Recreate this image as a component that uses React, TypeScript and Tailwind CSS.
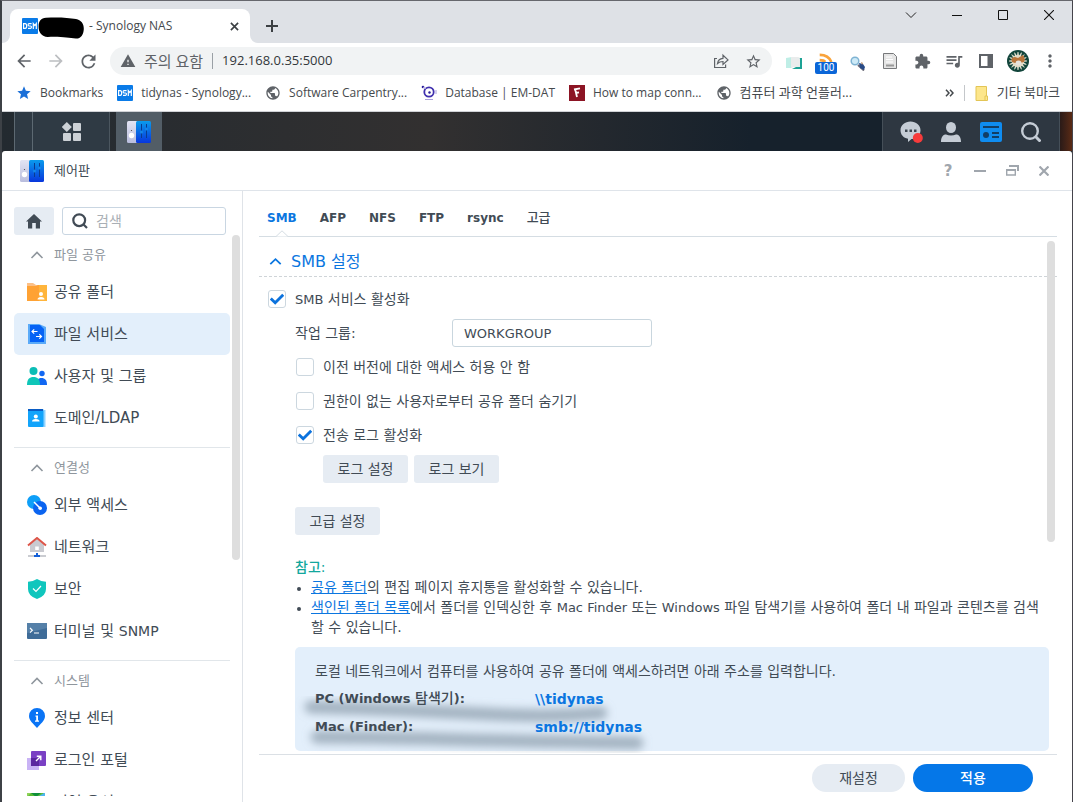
import type { ReactNode } from 'react';
import {
  MdArrowBack,
  MdArrowForward,
  MdExtension,
  MdMoreVert,
  MdPublic,
  MdQueueMusic,
  MdRefresh,
  MdStar,
  MdStarBorder,
  MdWarning,
} from 'react-icons/md';

/* Latin runs sit one size below the Hangul around them. */
function En({ children }: { children: ReactNode }) {
  return <span className="text-[13px] leading-4">{children}</span>;
}

function DsmLogo() {
  return (
    <svg viewBox="0 0 16 16" className="size-4 shrink-0" aria-hidden="true">
      <rect width="16" height="16" rx="1" fill="#0a7be8" />
      <g fill="none" stroke="#fff" strokeWidth="1.2">
        <path d="M1.6 5.7h1.6q1.5 0 1.5 2.3t-1.5 2.3H1.6z" />
        <path d="M9.6 5.7H7q-.9 0-.9 1.1T7 8h1.500q1 0 1 1.100t-1 1.200H6" />
        <path d="M11.300 10.900V5.600l1.500 2 1.500-2v5.300" />
      </g>
    </svg>
  );
}

function ControlPanelIcon() {
  return (
    <svg viewBox="0 0 24 22" className="h-[22px] w-6" aria-hidden="true">
      <defs>
        <linearGradient id="cpBlue" x1="0" y1="0" x2="0" y2="1">
          <stop offset="0" stopColor="#0a9bec" />
          <stop offset="1" stopColor="#0836dc" />
        </linearGradient>
        <linearGradient id="cpGrey" x1="0" y1="0" x2="0" y2="1">
          <stop offset="0" stopColor="#e2e4f3" />
          <stop offset="1" stopColor="#b9bddd" />
        </linearGradient>
      </defs>
      <rect width="11" height="22" rx="1.500" fill="url(#cpGrey)" />
      <rect x="9" width="15" height="22" rx="1.500" fill="url(#cpBlue)" />
      <circle cx="4.500" cy="14.500" r="2.700" fill="#fff" />
      <circle cx="4.500" cy="9.500" r=".6" fill="#444" />
      <path d="M14.500 3v14M19.500 3v14" stroke="#0a3c8f" strokeWidth="1" />
      <circle cx="14.500" cy="11" r="1.500" fill="#1687e8" />
      <circle cx="19.500" cy="8" r="1.500" fill="#1687e8" />
    </svg>
  );
}

/* ---------- Browser chrome ---------- */

function TabStrip() {
  return (
    <div className="flex h-[42px] shrink-0 items-start bg-[#dee1e6]">
      <div className="relative mt-2 ml-2 flex h-[34px] w-60 items-center rounded-t-lg bg-white pr-2 pl-3">
        <svg viewBox="0 0 8 8" className="absolute bottom-0 -left-2 size-2" aria-hidden="true">
          <path d="M8 0v8H0a8 8 0 0 0 8-8z" fill="#fff" />
        </svg>
        <svg viewBox="0 0 8 8" className="absolute -right-2 bottom-0 size-2" aria-hidden="true">
          <path d="M0 0v8h8a8 8 0 0 1-8-8z" fill="#fff" />
        </svg>
        <DsmLogo />
        <svg viewBox="0 0 46 22" className="mt-1 h-[22px] w-[46px]" aria-hidden="true">
          <path
            d="M8 .8C18 0 30 .500 38 2c5 1 8 4.500 7.800 10-.3 6-3 9.800-8 9.600-7-.4-14-2.300-28-1.600C3.500 19.800.600 15 .6 10 .500 4 3 1 8 .8z"
            fill="#000"
          />
        </svg>
        <span className="ml-[5px] flex-1 text-[12px] whitespace-nowrap text-[#45494d]">- Synology NAS</span>
        <button aria-label="탭 닫기" className="grid size-4 place-items-center">
          <svg viewBox="0 0 10 10" className="size-[9px]" stroke="#3c4043" strokeWidth="1.800" aria-hidden="true">
            <path d="M1 1l8 8M9 1L1 9" />
          </svg>
        </button>
      </div>
      <button aria-label="새 탭" className="mt-[11px] ml-2 grid size-7 place-items-center">
        <svg viewBox="0 0 12 12" className="size-3" stroke="#3c4043" strokeWidth="2" aria-hidden="true">
          <path d="M6 0v12M0 6h12" />
        </svg>
      </button>
      <div className="ml-auto flex h-7">
        <button aria-label="탭 검색" className="grid w-[46px] place-items-center">
          <svg viewBox="0 0 12 12" className="size-3" fill="none" stroke="#222" aria-hidden="true">
            <path d="M1 3.500l5 5 5-5" />
          </svg>
        </button>
        <button aria-label="최소화" className="grid w-[46px] place-items-center">
          <svg viewBox="0 0 10 10" className="size-[10px]" stroke="#111" aria-hidden="true">
            <path d="M0 5.500h10" />
          </svg>
        </button>
        <button aria-label="최대화" className="grid w-[46px] place-items-center">
          <svg viewBox="0 0 10 10" className="size-[10px]" fill="none" stroke="#111" aria-hidden="true">
            <path d="M.5.5h9v9h-9z" />
          </svg>
        </button>
        <button aria-label="닫기" className="grid w-[46px] place-items-center">
          <svg viewBox="0 0 10 10" className="size-[10px]" stroke="#111" strokeWidth="1.100" aria-hidden="true">
            <path d="M0 0l10 10M10 0L0 10" />
          </svg>
        </button>
      </div>
    </div>
  );
}

function Extension({ label, children }: { label: string; children: ReactNode }) {
  return (
    <button aria-label={label} className="grid h-7 w-8 place-items-center text-[#5f6368]">
      {children}
    </button>
  );
}

function Toolbar() {
  const rays = Array.from({ length: 16 }, (_, i) => i * 22.5);
  return (
    <div className="flex h-9 shrink-0 items-center bg-white px-1.5 text-[#5f6368]">
      <button aria-label="뒤로" className="grid h-7 w-8 place-items-center">
        <MdArrowBack className="size-5" />
      </button>
      <button aria-label="앞으로" className="grid h-7 w-8 place-items-center text-[#bcbec1]">
        <MdArrowForward className="size-5" />
      </button>
      <button aria-label="새로고침" className="grid h-7 w-8 place-items-center">
        <MdRefresh className="size-[21px]" />
      </button>
      <div className="mx-1.5 flex h-7 flex-1 items-center rounded-full bg-[#f1f3f4] pr-2.5 pl-2.5">
        <MdWarning className="size-4" />
        <span className="ml-2 text-[15px] whitespace-nowrap">주의 요함</span>
        <span className="mx-[9px] h-4 w-px bg-[#9aa0a6]" />
        <input
          aria-label="주소"
          readOnly
          value="192.168.0.35:5000"
          className="w-0 flex-1 bg-transparent font-['Open_Sans',sans-serif] text-[13px] text-[#33373b] outline-none"
        />
        <button aria-label="공유" className="mr-4">
          <svg viewBox="0 0 16 16" className="size-4" fill="none" stroke="#5f6368" strokeWidth="1.200" aria-hidden="true">
            <path d="M4 5.500H1.600v9h11V11.500" />
            <path d="M4.500 10.500c.5-3.300 2.300-5 5.500-5.200V2.200l5 4.700-5 4.500V8.500c-2.400 0-4 .5-5.500 2z" />
          </svg>
        </button>
        <button aria-label="북마크 추가">
          <MdStarBorder className="size-[17px]" />
        </button>
      </div>
      <Extension label="책">
        <svg viewBox="0 0 16 14" className="mt-1 h-[14px] w-4" aria-hidden="true">
          <path d="M0 2l6-1v11H0z" fill="#bfeee6" />
          <path d="M10 2h6v11H6l4-2z" fill="#1da295" />
          <path d="M5 1h7q2 0 2 2v8H8l-3 1z" fill="#e9ecec" />
        </svg>
      </Extension>
      <Extension label="피드">
        <span className="flex flex-col items-center pt-1">
          <svg viewBox="0 0 16 10" className="h-[9px] w-4" fill="none" stroke="#f9a33b" strokeWidth="3" aria-hidden="true">
            <path d="M1 2C7 2 12 5 14 10M1 8c3 0 5 .5 6 2" />
          </svg>
          <span className="rounded-[2px] bg-[#0b66d8] px-[3px] font-['Roboto',sans-serif] text-[10px] leading-3 text-white">100</span>
        </span>
      </Extension>
      <Extension label="돋보기">
        <svg viewBox="0 0 16 15" className="mt-1 h-[15px] w-4" aria-hidden="true">
          <circle cx="5" cy="5" r="3.800" fill="#cdeaf7" stroke="#7fb3d3" strokeWidth="1.500" />
          <path d="M8 9l6 5.500" stroke="#6b6b78" strokeWidth="2" />
          <path d="M9 7l4 1 2 3-1 3-4-2z" fill="#284a86" />
          <path d="M11 6l2 1-1 2z" fill="#b98b62" />
        </svg>
      </Extension>
      <Extension label="문서">
        <svg viewBox="0 0 14 16" className="h-4 w-[14px]" fill="#e4e4e4" stroke="#77797b" aria-hidden="true">
          <path d="M.5.5h10l3 3v12H.5z" />
          <path d="M3 4h6M3 6.500h7M3 9h7" stroke="#fff" />
          <path d="M3 12.500h8" strokeWidth="2" stroke="#999" />
        </svg>
      </Extension>
      <Extension label="확장 프로그램">
        <MdExtension className="size-[17px]" />
      </Extension>
      <Extension label="미디어 제어">
        <MdQueueMusic className="size-5" />
      </Extension>
      <Extension label="측면 패널">
        <svg viewBox="0 0 14 14" className="size-[14px]" aria-hidden="true">
          <path d="M0 0h14v14H0zM2 2v10h6.500V2z" fillRule="evenodd" fill="#5f6368" />
        </svg>
      </Extension>
      <Extension label="프로필">
        <svg viewBox="0 0 22 22" className="size-[22px]" aria-hidden="true">
          <circle cx="11" cy="11" r="11" fill="#12453b" />
          {rays.map((deg) => (
            <path key={deg} d="M10 7L11 2 12 7z" fill="#f5efdc" stroke="#f5efdc" strokeWidth=".5" transform={`rotate(${deg} 11 11)`} />
          ))}
          <circle cx="11" cy="11" r="6" fill="#e3dbc6" />
          <path d="M5 12q-2-5 3-5l3 1 5-3q3 4 1 7l-4 1H8z" fill="#b8743a" />
          <ellipse cx="11.500" cy="13" rx="3" ry="2.500" fill="#e5e2dc" />
        </svg>
      </Extension>
      <Extension label="메뉴">
        <MdMoreVert className="size-5" />
      </Extension>
    </div>
  );
}

function Bookmark({ icon, children }: { icon: ReactNode; children: ReactNode }) {
  return (
    <a href="#" className="flex items-center gap-2 whitespace-nowrap">
      {icon}
      <span>{children}</span>
    </a>
  );
}

function BookmarksBar() {
  return (
    <nav className="flex h-[33px] shrink-0 items-center gap-[14px] border-b border-[#d0d2d6] bg-white pr-3 pb-1 pl-3.5 text-[12px] text-[#45494d]">
      <Bookmark icon={<MdStar className="size-4 text-[#1a6fd8]" />}>Bookmarks</Bookmark>
      <Bookmark icon={<DsmLogo />}>tidynas - Synology...</Bookmark>
      <Bookmark icon={<MdPublic className="size-4 text-[#5f6368]" />}>Software Carpentry...</Bookmark>
      <Bookmark
        icon={
          <svg viewBox="0 0 16 16" className="size-4" aria-hidden="true">
            <circle cx="8" cy="7" r="4.700" fill="none" stroke="#3f2fae" strokeWidth="1.800" />
            <circle cx="8.500" cy="7.500" r="1.200" fill="#2a1c9a" />
            <circle cx="2" cy="2" r="1.300" fill="#2a1c9a" />
            <path d="M2 2l3 2M4 14.500h8M15 5v4" stroke="#a9a0dc" strokeWidth="1" />
          </svg>
        }
      >
        Database | EM-DAT
      </Bookmark>
      <Bookmark
        icon={
          <svg viewBox="0 0 16 16" className="size-4" aria-hidden="true">
            <rect width="16" height="16" fill="#8c1424" />
            <path d="M5 4.500l6-1.200M6.200 4.500L8 12M6.500 8l3.500-.7" stroke="#fff" strokeWidth="1.800" />
          </svg>
        }
      >
        How to map conn...
      </Bookmark>
      <Bookmark icon={<MdPublic className="size-4 text-[#5f6368]" />}>
        <span className="text-[13px]">컴퓨터 과학 언플러...</span>
      </Bookmark>
      <button aria-label="북마크 더보기" className="ml-auto">
        <svg viewBox="0 0 9 8" className="h-2 w-[9px]" fill="none" stroke="#45494d" strokeWidth="1.500" aria-hidden="true">
          <path d="M1 .7L4 4 1 7.300M5 .7L8 4 5 7.300" />
        </svg>
      </button>
      <span className="-mx-1 h-4 w-px bg-[#c4c7ca]" />
      <Bookmark
        icon={
          <svg viewBox="0 0 14 15" className="h-[15px] w-[14px]" aria-hidden="true">
            <path d="M1 .5h10.500V14.500H1z" fill="#fde68b" stroke="#e3c556" />
            <path d="M10 10h2.500v4.500H10z" fill="#fde68b" stroke="#e3c556" />
          </svg>
        }
      >
        <span className="text-[13px]">기타 북마크</span>
      </Bookmark>
    </nav>
  );
}

/* ---------- DSM desktop ---------- */

function Taskbar() {
  return (
    <div className="flex h-[39px] shrink-0 bg-linear-to-r from-[#232a30] via-[#323030] via-40% to-[#16212c] to-70%">
      <div className="ml-3 w-[19px] border-x border-[#5d6972] bg-[#2f3a44]" />
      <button aria-label="메인 메뉴" className="grid w-[77px] place-items-center border-r border-[#4b565f] bg-[#2f3a44]">
        <svg viewBox="0 0 19 19" className="size-[19px]" fill="#ccd1d6" aria-hidden="true">
          <path d="M4.800 0l5 5-5 5-5-5z" />
          <rect x="11" y="1" width="8" height="8" rx="1" />
          <rect x="1" y="11" width="8" height="8" rx="1" />
          <rect x="11" y="11" width="8" height="8" rx="1" />
        </svg>
      </button>
      <button aria-label="제어판" className="ml-1.5 grid w-[46px] place-items-center bg-[#525d66]">
        <ControlPanelIcon />
      </button>
      <div className="ml-auto flex border-x border-[#454f58] bg-[#2e3741] px-2">
        <button aria-label="알림" className="grid w-10 place-items-center">
          <svg viewBox="0 0 23 22" className="h-[22px] w-[23px]" aria-hidden="true">
            <path d="M10.500.5C16 .5 20.500 4 20.500 9.200s-4 8.800-9 8.800L8 21v-3.300C3.500 17 .5 13.500.5 9.200.5 4 5 .5 10.500.5z" fill="#c5ccd5" />
            <path d="M5 8.500h2.500V11H5zM9.500 8.500H12V11H9.500zM14 8.500h2.500V11H14z" fill="#3d4650" />
            <circle cx="17.800" cy="17" r="5" fill="#f73b3b" />
          </svg>
        </button>
        <button aria-label="사용자" className="grid w-10 place-items-center">
          <svg viewBox="0 0 20 20" className="size-5" fill="#c5ccd5" aria-hidden="true">
            <ellipse cx="10" cy="5.500" rx="5" ry="5.500" />
            <path d="M0 20c0-5 2-7.500 5-7.500 3 1.200 7 1.200 10 0 3 0 5 2.500 5 7.500z" />
          </svg>
        </button>
        <button aria-label="위젯" className="grid w-10 place-items-center">
          <svg viewBox="0 0 22 20" className="h-5 w-[22px]" aria-hidden="true">
            <rect width="22" height="20" rx="2" fill="#0f8cf0" />
            <path d="M3 5h16M12 11h7M12 15h7" stroke="#123e66" strokeWidth="2" />
            <circle cx="6" cy="13" r="3" fill="#123e66" />
          </svg>
        </button>
        <button aria-label="검색" className="grid w-10 place-items-center">
          <svg viewBox="0 0 20 20" className="size-5" fill="none" stroke="#c5ccd5" strokeWidth="2.400" aria-hidden="true">
            <circle cx="9" cy="9" r="7.800" />
            <path d="M14.500 14.500l5 5" strokeWidth="3" />
          </svg>
        </button>
      </div>
      <div className="w-3 bg-linear-to-r from-[#2a1a17] to-[#5a2a14]" />
    </div>
  );
}

function WindowHeader() {
  return (
    <header className="flex h-10 shrink-0 items-center border-b border-[#dfe4ea] pr-[12px] pl-[18px]">
      <ControlPanelIcon />
      <h1 className="ml-2.5 flex-1 text-[13px] text-[#414b55]">제어판</h1>
      <button aria-label="도움말" className="w-8 pt-0.5 text-[15px] font-bold text-[#a0a6ad]">
        ?
      </button>
      <button aria-label="최소화" className="grid w-8 place-items-center">
        <svg viewBox="0 0 12 12" className="size-3" stroke="#a0a6ad" strokeWidth="2" aria-hidden="true">
          <path d="M0 6h12" />
        </svg>
      </button>
      <button aria-label="이전 크기로" className="grid w-8 place-items-center">
        <svg viewBox="0 0 13 11" className="h-[11px] w-[13px]" fill="none" stroke="#a0a6ad" aria-hidden="true">
          <path d="M3 1h9v5" strokeWidth="2" />
          <path d="M.7 4.700h8.600v5.300H.7z" strokeWidth="1.400" />
          <path d="M0 5h10" strokeWidth="2" />
        </svg>
      </button>
      <button aria-label="닫기" className="grid w-8 place-items-center">
        <svg viewBox="0 0 10 10" className="size-[10px]" stroke="#a0a6ad" strokeWidth="2.200" aria-hidden="true">
          <path d="M.5.5l9 9M9.500.5l-9 9" />
        </svg>
      </button>
    </header>
  );
}

const icons: Record<string, ReactNode> = {
  share: (
    <>
      <path d="M0 2V1h6l3 2h9v4H0z" fill="#fcc087" />
      <path d="M0 4h9l2-1h9v16H0z" fill="#ffa234" />
      <path d="M12 3h8v16h-8z" fill="#ffb53c" />
      <circle cx="14" cy="12" r="2" fill="#fff" />
      <path d="M10.500 17.500q0-2.500 3.500-2.500t3.500 2.500z" fill="#fff" />
    </>
  ),
  file: (
    <>
      <path d="M1 0h11l7 3v17H1z" fill="#5aaaf8" />
      <path d="M3 1h10l4 4v13H3z" fill="#0562f5" />
      <path d="M10.500 7.500H5M7.200 5.300L5 7.500l2.200 2.200M9 12.500h5.500M12.300 10.300l2.200 2.200-2.200 2.200" fill="none" stroke="#fff" strokeWidth="1.200" />
    </>
  ),
  users: (
    <>
      <circle cx="6.500" cy="5" r="4" fill="#0bbdb6" />
      <circle cx="15" cy="7.500" r="2.700" fill="#1167f2" />
      <path d="M9 19c0-5 2-7 5.500-7S20 14 20 19z" fill="#1167f2" />
      <path d="M0 19c0-6 2.500-8 6.500-8s6.500 2 6.500 8z" fill="#0fc6b8" />
    </>
  ),
  domain: (
    <>
      <path d="M17 2h1.500v17H3z" fill="#8fd3ff" />
      <rect x="1" y="1" width="15.500" height="18" rx="1" fill="#12a4fb" />
      <path d="M1 1h15v2H1z" fill="#0a5cc4" />
      <circle cx="8.800" cy="8.500" r="2" fill="#fff" />
      <path d="M5 13.500q0-2.500 3.800-2.500t3.800 2.500z" fill="#fff" />
    </>
  ),
  external: (
    <>
      <circle cx="7" cy="7" r="7" fill="#0e9ff8" />
      <circle cx="13" cy="13" r="7" fill="#0a64f0" />
      <path d="M7 7l6 6" stroke="#fff" strokeWidth="1.500" />
      <circle cx="13.200" cy="13.200" r="1.800" fill="#fff" />
    </>
  ),
  network: (
    <>
      <path d="M3 7l7-5 7 5v8H3z" fill="#c9cad0" />
      <path d="M8.200 9.500h3.600V13H8.200z" fill="#fff" />
      <path d="M1 8.500L10 1l9 7.500" fill="none" stroke="#dd5549" strokeWidth="2" />
      <path d="M1 19h18" stroke="#c4c7cc" strokeWidth="1.800" />
      <path d="M7 18h2v-2h2v2h2v2H7z" fill="#1560d8" />
    </>
  ),
  security: (
    <>
      <path d="M10 0q4 2.500 9 2.800V10q0 7-9 10Q1 17 1 10V2.800Q6 2.500 10 0z" fill="#10c6bd" />
      <path d="M6 9.500l3 3 5-5.500" fill="none" stroke="#fff" strokeWidth="1.200" />
    </>
  ),
  terminal: (
    <>
      <rect y="2" width="20" height="16" rx="1" fill="#3f6c98" />
      <path d="M0 2h20v5L0 12z" fill="#5580a8" />
      <path d="M3 7l2.300 2.300L3 11.600M7 12h5" fill="none" stroke="#fff" strokeWidth="1.200" />
    </>
  ),
  info: (
    <>
      <path d="M10 0a8 8 0 0 1 8 8c0 5-4.500 7.500-8 12-3.500-4.500-8-7-8-12a8 8 0 0 1 8-8z" fill="#0a74f5" />
      <path d="M9 4h2v2H9zM8.500 7.500H11V13H9.200V8.800h-.7zM8 12.500h4v1.200H8z" fill="#fff" />
    </>
  ),
  portal: (
    <>
      <path d="M0 8h12v12H0z" fill="#c9b3f5" />
      <rect x="4" y="1" width="15" height="15" rx="1" fill="#7a40c4" />
      <path d="M4 8h8v8H4z" fill="#5a279f" />
      <path d="M9 11l4.500-4.500M9.800 6.300h4v4" fill="none" stroke="#fff" strokeWidth="1.400" />
    </>
  ),
  region: (
    <>
      <path d="M0 1h18v18H0z" fill="#5bbb33" />
      <path d="M4 1h10l-5 4z" fill="#0f8f3a" />
      <path d="M12 4l5-3h1v5z" fill="#4db6f0" />
      <path d="M0 1h4L0 5z" fill="#8fd25a" />
    </>
  ),
};

type Item = { icon: string; label: ReactNode; active?: boolean };
type Section = { title: string; items: Item[] };

const sections: Section[] = [
  {
    title: '파일 공유',
    items: [
      { icon: 'share', label: '공유 폴더' },
      { icon: 'file', label: '파일 서비스', active: true },
      { icon: 'users', label: '사용자 및 그룹' },
      { icon: 'domain', label: '도메인/LDAP' },
    ],
  },
  {
    title: '연결성',
    items: [
      { icon: 'external', label: '외부 액세스' },
      { icon: 'network', label: '네트워크' },
      { icon: 'security', label: '보안' },
      { icon: 'terminal', label: <>터미널 및 <span className="text-[14px]">SNMP</span></> },
    ],
  },
  {
    title: '시스템',
    items: [
      { icon: 'info', label: '정보 센터' },
      { icon: 'portal', label: '로그인 포털' },
      { icon: 'region', label: '지역 옵션' },
    ],
  },
];

function Sidebar() {
  return (
    <aside className="flex w-[241px] shrink-0 flex-col border-r border-[#dfe3e8] pt-4 pb-1.5 pl-3">
      <div className="flex shrink-0 gap-2 pr-4">
        <button aria-label="홈" className="grid h-7 w-10 place-items-center rounded-[3px] bg-[#e6ecf3]">
          <svg viewBox="0 0 16 15" className="h-[15px] w-4" fill="#414b55" aria-hidden="true">
            <path d="M8 0l8 7.500h-2V14.500H9.800V9H6.200v5.500H2v-7H0z" />
          </svg>
        </button>
        <label className="flex h-7 w-0 flex-1 items-center gap-2 rounded-[3px] border border-[#c9d6e2] pl-[9px]">
          <svg viewBox="0 0 16 16" className="size-4 shrink-0" fill="none" stroke="#414b55" strokeWidth="2.200" aria-hidden="true">
            <circle cx="7.200" cy="7.200" r="5.900" />
            <path d="M11.300 11.300l3.700 3.700" />
          </svg>
          <input
            type="text"
            aria-label="검색"
            placeholder="검색"
            className="w-full min-w-0 bg-transparent text-[14px] outline-none placeholder:text-[#a9afb5]"
          />
        </label>
      </div>
      <div className="flex min-h-0 flex-1 gap-0.5 overflow-hidden">
        <nav className="w-[216px] pt-1.5">
          {sections.map((section, i) => (
            <div key={section.title} className={i > 0 ? 'mt-2 border-t border-[#e1e6ea] pt-1.5' : ''}>
              <button className="flex h-[30px] w-full items-center gap-2.5 pb-0.5 pl-4 text-[13px] text-[#8f969d]">
                <svg viewBox="0 0 14 10" className="h-[10px] w-[14px]" fill="none" stroke="#8f969d" strokeWidth="1.600" aria-hidden="true">
                  <path d="M1.500 8L7 2.500 12.500 8" />
                </svg>
                {section.title}
              </button>
              <ul>
                {section.items.map((item) => (
                  <li key={item.icon}>
                    <a
                      href="#"
                      className={
                        item.active
                          ? 'flex h-[42px] items-center gap-[7px] rounded-[5px] bg-[#e3effb] pl-[13px] text-[15px]'
                          : 'flex h-[42px] items-center gap-[7px] rounded-[5px] pl-[13px] text-[15px]'
                      }
                    >
                      <svg viewBox="0 0 20 20" className="size-5 shrink-0" aria-hidden="true">
                        {icons[item.icon]}
                      </svg>
                      <span className="whitespace-nowrap">{item.label}</span>
                    </a>
                  </li>
                ))}
              </ul>
            </div>
          ))}
        </nav>
        <div className="h-[58%] w-2 rounded-full bg-[#dedede]" />
      </div>
    </aside>
  );
}

function Check({ id, checked, children }: { id: string; checked?: boolean; children: ReactNode }) {
  return (
    <div className="flex h-[34px] items-center gap-[9px]">
      <span className="relative grid size-[18px] place-items-center">
        <input
          id={id}
          type="checkbox"
          defaultChecked={checked}
          className="peer size-[18px] appearance-none rounded-[3px] border border-[#ccd7df] bg-white"
        />
        <svg
          viewBox="0 0 14 12"
          className="pointer-events-none absolute hidden h-3 w-[14px] peer-checked:block"
          fill="none"
          stroke="#0b72dd"
          strokeWidth="2.800"
          aria-hidden="true"
        >
          <path d="M.8 5.500l4.400 4.300L13.200 1.800" />
        </svg>
      </span>
      <label htmlFor={id}>{children}</label>
    </div>
  );
}

function GreyButton({ children }: { children: ReactNode }) {
  return <button className="h-7 w-[85px] rounded-[3px] bg-[#e6ecf3]">{children}</button>;
}

const tabs = ['AFP', 'NFS', 'FTP', 'rsync'];

function Main() {
  return (
    <main className="flex min-w-0 flex-1 flex-col pr-[15px] pl-4 text-[14px] leading-5">
      <div role="tablist" className="flex h-[46px] shrink-0 items-center gap-[23px] border-b border-[#d5dde3] pt-2 pl-2 text-[12px] font-bold">
        <button role="tab" aria-selected="true" className="relative text-[#0b76e0]">
          SMB
          <svg viewBox="0 0 14 7" className="absolute top-[22px] left-2 h-[7px] w-[14px]" fill="#fff" stroke="#d5dde3" aria-hidden="true">
            <path d="M0 6.500h1L7 .8l6 5.700h1" />
          </svg>
        </button>
        {tabs.map((tab) => (
          <button key={tab} role="tab" aria-selected="false">
            {tab}
          </button>
        ))}
        <button role="tab" aria-selected="false" className="text-[13px] font-medium">
          고급
        </button>
      </div>

      <div className="relative min-h-0 flex-1 overflow-hidden">
        <div className="absolute top-1 right-0.5 h-[301px] w-2 rounded-full bg-[#dedede]" />
        <button className="flex h-10 w-full items-center gap-[9px] border-b border-dashed border-[#cfd4d8] pt-2.5 pl-2.5 text-[16px] text-[#0b76e0]">
          <svg viewBox="0 0 13 9" className="h-[9px] w-[13px]" fill="none" stroke="#0b76e0" strokeWidth="1.800" aria-hidden="true">
            <path d="M1.300 7.200l5.200-5 5.200 5" />
          </svg>
          SMB 설정
        </button>

        <div className="pt-[5px] pr-2 pl-[9px]">
          <Check id="smb" checked>
            <En>SMB</En> 서비스 활성화
          </Check>
          <div className="pl-[27px]">
            <div className="flex h-[34px] items-center">
              <label htmlFor="workgroup" className="w-[157px]">
                작업 그룹:
              </label>
              <input
                id="workgroup"
                type="text"
                defaultValue="WORKGROUP"
                className="h-7 w-[200px] rounded-[3px] border border-[#c9d6de] px-[11px] text-[13px] outline-none"
              />
            </div>
            <div className="ml-px">
              <Check id="legacy">이전 버전에 대한 액세스 허용 안 함</Check>
              <Check id="hide">권한이 없는 사용자로부터 공유 폴더 숨기기</Check>
              <Check id="log" checked>
                전송 로그 활성화
              </Check>
            </div>
            <div className="mt-[3px] ml-7 flex gap-1.5">
              <GreyButton>로그 설정</GreyButton>
              <GreyButton>로그 보기</GreyButton>
            </div>
            <div className="mt-6 flex">
              <GreyButton>고급 설정</GreyButton>
            </div>

            <p className="mt-[22px] font-medium text-[#12a79d]">참고:</p>
            <ul className="list-disc pl-4 marker:text-[12px]">
              <li>
                <a href="#" className="text-[#0b76e0] underline">공유 폴더</a>의 편집 페이지 휴지통을 활성화할 수 있습니다.
              </li>
              <li>
                <a href="#" className="text-[#0b76e0] underline">색인된 폴더 목록</a>에서 폴더를 인덱싱한 후 <En>Mac Finder</En> 또는{' '}
                <En>Windows</En> 파일 탐색기를 사용하여 폴더 내 파일과 콘텐츠를 검색할 수 있습니다.
              </li>
            </ul>

            <section className="relative mt-2.5 rounded-[5px] bg-[#e3effb] px-5 py-2.5 leading-7">
              <svg
                viewBox="0 0 370 60"
                className="absolute top-[46px] left-0 h-[60px] w-[370px]"
                fill="none"
                stroke="#8799a8"
                strokeLinecap="round"
                aria-hidden="true"
              >
                <filter id="smudge" x="-5%" y="-30%" width="110%" height="160%">
                  <feGaussianBlur stdDeviation="4" />
                </filter>
                <g filter="url(#smudge)" strokeOpacity=".7">
                  <path d="M16 14C60 15 110 17 170 20S260 24 306 20" strokeWidth="13" />
                  <path d="M22 44C90 44 200 48 342 50" strokeWidth="13" />
                </g>
              </svg>
              <p>로컬 네트워크에서 컴퓨터를 사용하여 공유 폴더에 액세스하려면 아래 주소를 입력합니다.</p>
              <dl className="relative grid grid-cols-[220px_1fr] text-[13px] font-bold">
                <dt>
                  PC (Windows <span className="text-[14px] leading-4 font-medium">탐색기</span>):
                </dt>
                <dd className="text-[14px] text-[#0b76e0]">\\tidynas</dd>
                <dt>Mac (Finder):</dt>
                <dd className="text-[14px] text-[#0b76e0]">smb://tidynas</dd>
              </dl>
            </section>
          </div>
        </div>
      </div>

      <footer className="flex h-12 shrink-0 justify-end gap-2 border-t border-[#dbe0e5] pt-[9px] pr-6">
        <button className="h-7 w-[93px] rounded-full bg-[#e6ecf3]">재설정</button>
        <button className="h-7 w-[120px] rounded-full bg-[#0577e8] font-medium text-white">적용</button>
      </footer>
    </main>
  );
}

export default function App() {
  return (
    <div className="flex h-screen flex-col overflow-hidden border-t border-r border-l-2 border-t-[#66676d] border-r-[#45444b] border-l-[#3d4146] bg-[#1c2128] font-['Open_Sans','Noto_Sans_CJK_KR',sans-serif]">
      <TabStrip />
      <Toolbar />
      <BookmarksBar />
      <Taskbar />
      <div className="flex min-h-0 flex-1 flex-col rounded-t-[3px] bg-white font-['DejaVu_Sans','Noto_Sans_CJK_KR',sans-serif] text-[#414b55]">
        <WindowHeader />
        <div className="flex min-h-0 flex-1">
          <Sidebar />
          <Main />
        </div>
      </div>
    </div>
  );
}
